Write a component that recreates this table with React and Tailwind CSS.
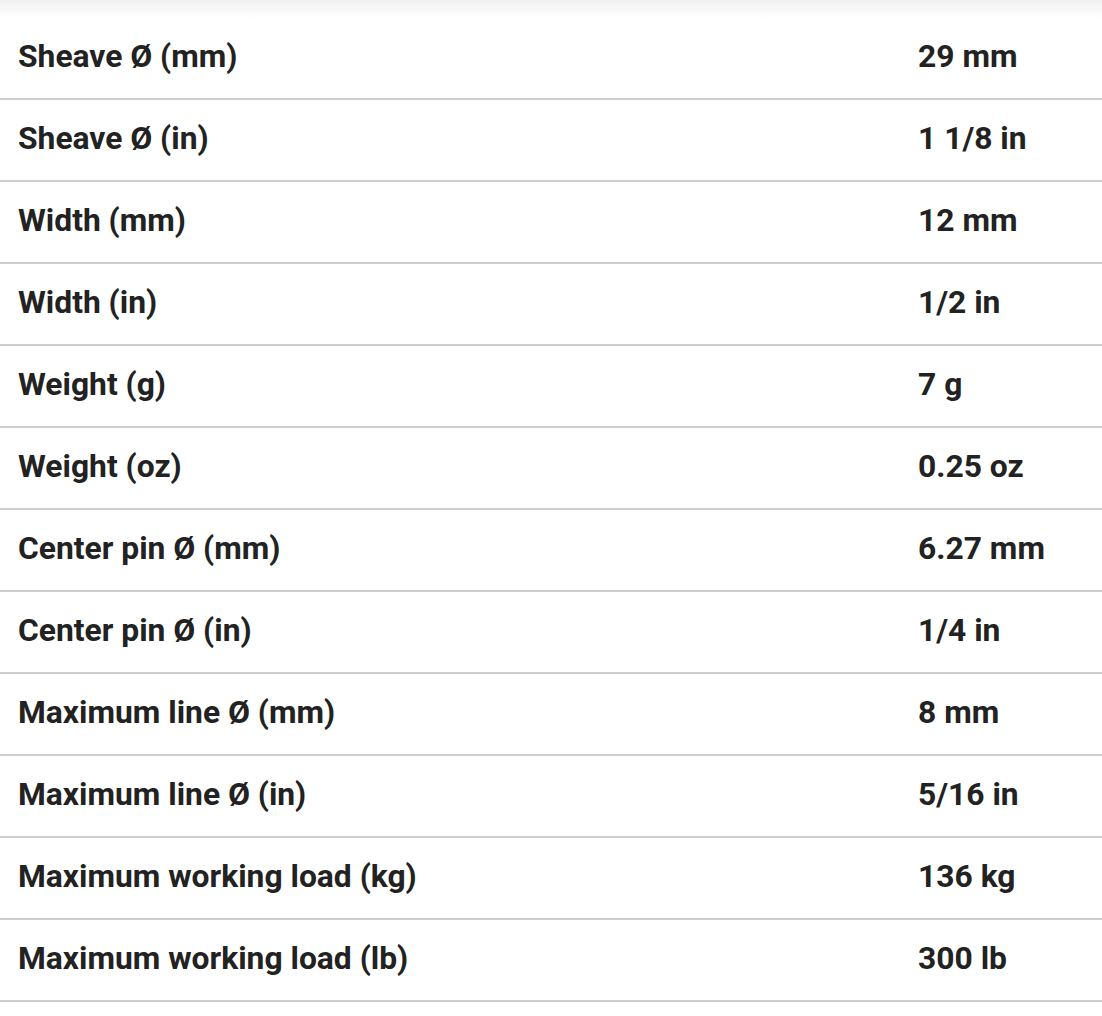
import React from "react";

const rows = [
  ["Sheave Ø (mm)", "29 mm"],
  ["Sheave Ø (in)", "1 1/8 in"],
  ["Width (mm)", "12 mm"],
  ["Width (in)", "1/2 in"],
  ["Weight (g)", "7 g"],
  ["Weight (oz)", "0.25 oz"],
  ["Center pin Ø (mm)", "6.27 mm"],
  ["Center pin Ø (in)", "1/4 in"],
  ["Maximum line Ø (mm)", "8 mm"],
  ["Maximum line Ø (in)", "5/16 in"],
  ["Maximum working load (kg)", "136 kg"],
  ["Maximum working load (lb)", "300 lb"],
];

export default function App() {
  return (
    <div className="w-[1102px] h-[1016px] bg-white overflow-hidden font-['Roboto',sans-serif] text-[#222222]">
      <div className="h-[18px] bg-gradient-to-b from-[#f0f0f0] to-white" />
      {rows.map(([k, v]) => (
        <div key={k} className="flex items-center h-[82px] pb-[2px] border-b-2 border-[#cfcfcf]">
          <div className="w-[900px] pl-[18px] text-[31.8px] font-bold leading-none">{k}</div>
          <div className="pl-[18px] text-[31.8px] font-bold leading-none">{v}</div>
        </div>
      ))}
    </div>
  );
}
